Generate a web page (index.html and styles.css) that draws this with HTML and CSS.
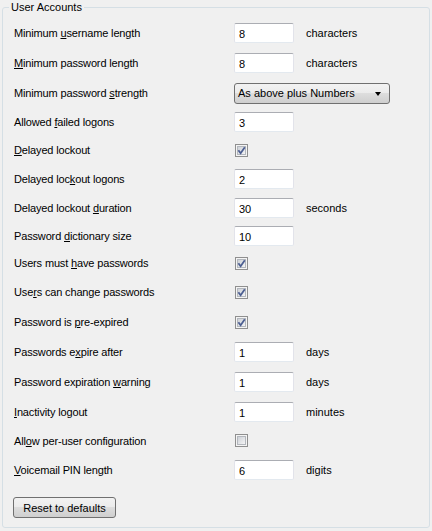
FILE: index.html
```html
<!DOCTYPE html>
<html>
<head>
	<title>User Accounts</title>
	<link rel="stylesheet" href="styles.css">
</head>
<body>
	<svg class="defs" width="0" height="0">
		<defs>
			<linearGradient id="boxfill" x1="0" y1="0" x2="1" y2="1">
				<stop offset="0" stop-color="#cbcfd5"/>
				<stop offset="1" stop-color="#f7f7f7"/>
			</linearGradient>
			<symbol id="box" viewBox="0 0 13 13">
				<rect x="0.5" y="0.5" width="12" height="12" fill="#f4f4f4" stroke="#8f8f8f"/>
				<rect x="2.5" y="2.5" width="8" height="8" fill="url(#boxfill)" stroke="#b3b7bd"/>
			</symbol>
		</defs>
	</svg>
	<fieldset class="group">
		<legend class="group-title">User Accounts</legend>
		<div class="settings">
			<!-- 1 -->
			<label class="lbl">Minimum <u>u</u>sername length</label>
			<span class="ctl"><input class="txt" value="8"></span>
			<span class="unit">characters</span>
			<!-- 2 -->
			<label class="lbl"><u>M</u>inimum password length</label>
			<span class="ctl"><input class="txt" value="8"></span>
			<span class="unit">characters</span>
			<!-- 3 -->
			<label class="lbl">Minimum password <u>s</u>trength</label>
			<span class="ctl wide">
				<span class="combo">As above plus Numbers<i class="arrow"></i></span>
			</span>
			<!-- 4 -->
			<label class="lbl">Allowed <u>f</u>ailed logons</label>
			<span class="ctl"><input class="txt" value="3"></span>
			<span class="unit"></span>
			<!-- 5 -->
			<label class="lbl"><u>D</u>elayed lockout</label>
			<span class="ctl"><svg class="chk" width="13" height="13"><use href="#box"/><path class="tick" d="M3.4 6.2 L5.6 9.2 L9.8 3.2"/></svg></span>
			<span class="unit"></span>
			<!-- 6 -->
			<label class="lbl">Delayed loc<u>k</u>out logons</label>
			<span class="ctl"><input class="txt" value="2"></span>
			<span class="unit"></span>
			<!-- 7 -->
			<label class="lbl">Delayed lockout <u>d</u>uration</label>
			<span class="ctl"><input class="txt" value="30"></span>
			<span class="unit">seconds</span>
			<!-- 8 -->
			<label class="lbl">Password <u>d</u>ictionary size</label>
			<span class="ctl"><input class="txt" value="10"></span>
			<span class="unit"></span>
			<!-- 9 -->
			<label class="lbl">Users must <u>h</u>ave passwords</label>
			<span class="ctl"><svg class="chk" width="13" height="13"><use href="#box"/><path class="tick" d="M3.4 6.2 L5.6 9.2 L9.8 3.2"/></svg></span>
			<span class="unit"></span>
			<!-- 10 -->
			<label class="lbl">Use<u>r</u>s can change passwords</label>
			<span class="ctl"><svg class="chk" width="13" height="13"><use href="#box"/><path class="tick" d="M3.4 6.2 L5.6 9.2 L9.8 3.2"/></svg></span>
			<span class="unit"></span>
			<!-- 11 -->
			<label class="lbl">Password is <u>p</u>re-expired</label>
			<span class="ctl"><svg class="chk" width="13" height="13"><use href="#box"/><path class="tick" d="M3.4 6.2 L5.6 9.2 L9.8 3.2"/></svg></span>
			<span class="unit"></span>
			<!-- 12 -->
			<label class="lbl">Passwords e<u>x</u>pire after</label>
			<span class="ctl"><input class="txt" value="1"></span>
			<span class="unit">days</span>
			<!-- 13 -->
			<label class="lbl">Password expiration <u>w</u>arning</label>
			<span class="ctl"><input class="txt" value="1"></span>
			<span class="unit">days</span>
			<!-- 14 -->
			<label class="lbl"><u>I</u>nactivity logout</label>
			<span class="ctl"><input class="txt" value="1"></span>
			<span class="unit">minutes</span>
			<!-- 15 -->
			<label class="lbl">All<u>o</u>w per-user configuration</label>
			<span class="ctl"><svg class="chk" width="13" height="13"><use href="#box"/></svg></span>
			<span class="unit"></span>
			<!-- 16 -->
			<label class="lbl"><u>V</u>oicemail PIN length</label>
			<span class="ctl"><input class="txt" value="6"></span>
			<span class="unit">digits</span>
		</div>
		<button class="btn">Reset to defaults</button>
	</fieldset>
</body>
</html>
```

FILE: styles.css
```css
*{
	margin: 0;
	padding: 0;
	box-sizing: border-box;
}
body{
	background: #f0f0f0;
	font-family: "Liberation Sans", Arial, sans-serif;
	font-size: 11px;
	color: #000;
	padding: 0 2px;
}
.defs{
	position: absolute;
}
.group{
	height: 528px;
	border: 1px solid #d5dfe5;
	border-radius: 3px;
	padding: 0 0 0 11px;
}
.group-title{
	margin-left: -5px;
	padding: 0 2px;
	line-height: 14px;
	height: 14px;
}
.settings{
	display: grid;
	grid-template-columns: 220px 72px auto;
	grid-template-rows: 30px 30px 30px 28px 28px 29px 29px 27px 28px 30px 30px 30px 30px 29px 29px 30px;
	margin-top: 4px;
	align-items: center;
}
.lbl{
	line-height: 14px;
	letter-spacing: -0.15px;
}
.lbl u{
	text-decoration: underline;
}
.ctl{
	display: flex;
	align-items: center;
}
.wide{
	grid-column: 2 / 4;
}
.txt{
	width: 60px;
	height: 20px;
	border: 1px solid #e2e3ea;
	border-top-color: #abadb3;
	border-bottom-color: #e3e9ef;
	border-radius: 2px;
	background: #fff;
	font: inherit;
	padding: 2px 0 0 4px;
	color: #000;
	outline: none;
}
.chk{
	display: block;
	margin-left: 1px;
}
.tick{
	fill: none;
	stroke: #4d5f92;
	stroke-width: 1.8;
}
.unit{
	line-height: 14px;
}
.combo{
	position: relative;
	display: block;
	width: 156px;
	height: 21px;
	line-height: 19px;
	padding-left: 3px;
	border: 1px solid #707070;
	border-radius: 3px;
	background: linear-gradient(#f2f2f2 0%, #ebebeb 50%, #dddddd 50%, #cfcfcf 100%);
}
.arrow{
	position: absolute;
	right: 8px;
	top: 8px;
	width: 0;
	height: 0;
	border-left: 3.5px solid transparent;
	border-right: 3.5px solid transparent;
	border-top: 4px solid #000;
}
.btn{
	display: block;
	margin: 12px 0 0 -1px;
	width: 103px;
	height: 21px;
	font: inherit;
	color: #000;
	border: 1px solid #707070;
	border-radius: 3px;
	background: linear-gradient(#f2f2f2 0%, #ebebeb 50%, #dddddd 50%, #cfcfcf 100%);
}
```
